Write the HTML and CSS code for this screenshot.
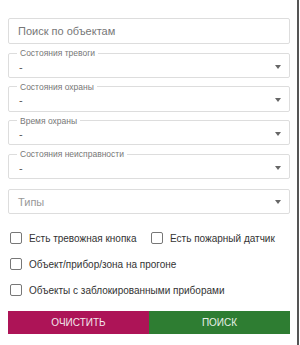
FILE: index.html
```html
<!DOCTYPE html>
<html lang="ru">
<head>
    <meta charset="UTF-8">
    <meta name="viewport" content="width=device-width, initial-scale=1.0">
    <title>Фильтр объектов</title>
    <link rel="stylesheet" href="styles.css">
</head>
<body>
    <div class="panel">
        <input type="text" class="search" placeholder="Поиск по объектам">

        <fieldset class="select">
            <legend>Состояния тревоги</legend>
            <div class="select-row"><span class="value">-</span><span class="caret"></span></div>
        </fieldset>
        <fieldset class="select">
            <legend>Состояния охраны</legend>
            <div class="select-row"><span class="value">-</span><span class="caret"></span></div>
        </fieldset>
        <fieldset class="select">
            <legend>Время охраны</legend>
            <div class="select-row"><span class="value">-</span><span class="caret"></span></div>
        </fieldset>
        <fieldset class="select">
            <legend>Состояния неисправности</legend>
            <div class="select-row"><span class="value">-</span><span class="caret"></span></div>
        </fieldset>

        <div class="types">
            <span class="placeholder">Типы</span><span class="caret"></span>
        </div>

        <div class="checks">
            <label class="check"><input type="checkbox"><span>Есть тревожная кнопка</span></label>
            <label class="check"><input type="checkbox"><span>Есть пожарный датчик</span></label>
            <label class="check wide"><input type="checkbox"><span>Объект/прибор/зона на прогоне</span></label>
            <label class="check wide"><input type="checkbox"><span>Объекты с заблокированными приборами</span></label>
        </div>

        <div class="actions">
            <button class="btn btn-clear">Очистить</button>
            <button class="btn btn-search">Поиск</button>
        </div>
    </div>
</body>
</html>
```

FILE: styles.css
```css
body {
    margin: 0;
    background: #fff;
    font-family: 'Liberation Sans', Arial, sans-serif;
    color: #333;
}
.panel {
    width: 299px;
    height: 345px;
    padding: 18px 7px 0 8px;
    box-sizing: border-box;
    border-right: 2px solid #555;
    overflow: hidden;
}
.search {
    display: block;
    width: 100%;
    height: 26px;
    box-sizing: border-box;
    margin: 0;
    padding: 0 9px;
    border: 1px solid #ddd;
    border-radius: 2px;
    font-family: inherit;
    font-size: 11px;
    color: #333;
}
.search::placeholder {
    color: #777;
}
.select {
    margin: 3px 0 0;
    padding: 0 8px 2.75px 10px;
    border: 1px solid #ddd;
    border-radius: 2px;
    min-width: 0;
}
.select legend {
    margin-left: -2px;
    padding: 0 3px;
    font-size: 8.5px;
    line-height: 12px;
    color: #777;
}
.select-row {
    display: flex;
    justify-content: space-between;
    align-items: center;
    height: 15px;
}
.value {
    font-size: 11px;
    color: #555;
}
.caret {
    width: 0;
    height: 0;
    border-left: 3.5px solid transparent;
    border-right: 3.5px solid transparent;
    border-top: 4px solid #666;
}
.types {
    display: flex;
    justify-content: space-between;
    align-items: center;
    height: 25px;
    box-sizing: border-box;
    margin-top: 10px;
    padding: 0 8px 0 9px;
    border: 1px solid #ddd;
    border-radius: 2px;
}
.placeholder {
    font-size: 11px;
    color: #999;
}
.checks {
    display: grid;
    grid-template-columns: 1fr 1fr;
    margin-top: 11px;
}
.check {
    display: flex;
    align-items: center;
    height: 26px;
    padding-left: 2px;
    font-size: 10px;
    color: #333;
    white-space: nowrap;
}
.check.wide {
    grid-column: 1 / 3;
}
.check input {
    appearance: none;
    width: 12px;
    height: 12px;
    margin: 0 7px 0 0;
    border: 1.5px solid #777;
    border-radius: 2px;
    flex-shrink: 0;
}
.actions {
    display: grid;
    grid-template-columns: 1fr 1fr;
    margin-top: 8px;
}
.btn {
    height: 23px;
    border: 0;
    border-radius: 0;
    font-family: inherit;
    font-size: 10px;
    text-transform: uppercase;
    color: #f3e6ec;
}
.btn-clear {
    background: #ad1457;
}
.btn-search {
    background: #2e7d32;
    color: #e6f0e6;
}
```
